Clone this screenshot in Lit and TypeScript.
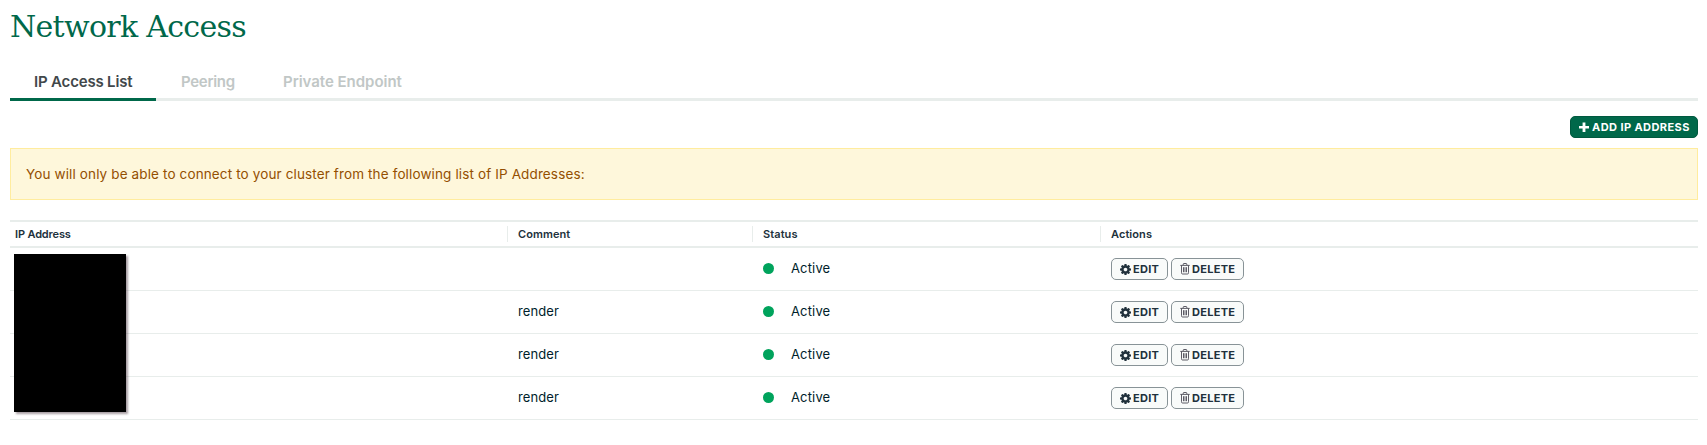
import { LitElement, html, css, svg } from "lit";
import { customElement } from "lit/decorators.js";

const plus = svg`<svg class="plus" width="10" height="11" viewBox="0 0 10 11"><path d="M3.600.5h2.800v3.400H10v2.700H6.400V10H3.600V6.600H0V3.900h3.600z" fill="#fff"/></svg>`;

const gear = svg`<svg width="11" height="11" viewBox="0 0 1536 1536"><path fill="#21313c" d="M1024 768q0-106-75-181t-181-75-181 75-75 181 75 181 181 75 181-75 75-181zm512-109v222q0 12-8 23t-20 13l-185 28q-19 54-39 91 35 50 107 138 10 12 10 25t-9 23q-27 37-99 108t-94 71q-12 0-26-9l-138-108q-44 23-91 38-16 136-29 186-7 28-36 28H657q-14 0-24.500-8.500T621 1506l-28-184q-49-16-90-37l-141 107q-10 9-25 9-14 0-25-11-126-114-165-168-7-10-7-23 0-12 8-23 15-21 51-66.500t54-70.500q-27-50-41-99L29 913q-13-2-21-12.500T0 877V655q0-12 8-23t19-13l186-28q14-46 39-92-40-57-107-138-10-12-10-24 0-10 9-23 26-36 98.500-107.500T337 135q13 0 26 10l138 107q44-23 91-38 16-136 29-186 7-28 36-28h222q14 0 24.500 8.500T915 30l28 184q49 16 90 37l142-107q9-9 24-9 13 0 25 10 129 119 165 170 7 8 7 22 0 12-8 23-15 21-51 66.500t-54 70.500q26 50 41 98l183 28q13 2 21 12.500t8 23.500z"/></svg>`;

const trash = svg`<svg width="10" height="12" viewBox="0 0 10 12" fill="none" stroke="#4b4a55"><path d="M3.200 2V1.200Q3.200.5 3.900.5h2.200q.7 0 .7.700V2M.3 2.400h9.400M1.500 2.500v7.200q0 1.300 1 1.300h5q1 0 1-1.300V2.500M3.500 4.200v5M5 4.200v5M6.500 4.200v5" stroke-width=".9"/></svg>`;

@customElement("app-root")
export class AppRoot extends LitElement {
  static styles = css`
    :host { display: block; box-sizing: border-box; height: 445px; padding: 0 9px 0 10px; background: #fff; color: #21313c; font-family: Inter, "Open Sans", sans-serif; overflow: hidden; }
    * { box-sizing: border-box; }
    h1 { margin: 0; height: 66px; padding-top: 9px; font: 400 30px/36px "DejaVu Serif", serif; letter-spacing: -0.7px; color: #00684a; white-space: nowrap; }
    .tabs { display: flex; height: 35px; border-bottom: 3px solid #e8edeb; font-size: 15px; font-weight: 600; line-height: 31px; color: #c1c7c6; white-space: nowrap; }
    .tab { height: 35px; padding-left: 24px; }
    .t0 { width: 146px; color: #41474a; border-bottom: 3px solid #00684a; letter-spacing: -0.18px; }
    .t1 { width: 103px; padding-left: 25px; letter-spacing: -0.3px; }
    .t2 { letter-spacing: -0.03px; }
    .bar { display: flex; justify-content: flex-end; padding: 15px 0 10px; height: 47px; }
    button { display: flex; align-items: center; height: 22px; margin: 0; font: 700 11px/20px Inter, sans-serif; letter-spacing: 0.3px; border-radius: 5px; white-space: nowrap; }
    .add { width: 128px; padding: 0 0 0 8px; gap: 3px; border: 1px solid #00593f; background: #00684a; color: #fff; letter-spacing: 0.42px; }
    .notice { height: 52px; padding-left: 15px; border: 1px solid #ffec9e; background: #fef7db; color: #944f01; font-size: 13.500px; letter-spacing: 0.13px; line-height: 51px; white-space: nowrap; }
    .table { margin-top: 20px; }
    .row { display: grid; grid-template-columns: 497px 245px 348px 1fr; height: 43px; align-items: center; border-bottom: 1px solid #e8edeb; font-size: 13px; color: #001e2b; }
    .head { height: 28px; border-top: 2px solid #e8edeb; border-bottom: 2px solid #e8edeb; font-size: 11px; font-weight: 600; color: #21313c; }
    .head .cell { height: 16px; line-height: 16px; border-left: 1px solid #e8edeb; padding-left: 10px; letter-spacing: 0.08px; }
    .head .cell:first-child { border-left: 0; padding-left: 5px; letter-spacing: -0.15px; }
    .cell { padding-left: 11px; }
    .comment { padding-bottom: 2px; letter-spacing: 0.08px; }
    .status { display: flex; align-items: center; gap: 17px; padding-bottom: 1px; }
    .active { padding-bottom: 1px; letter-spacing: 0.15px; }
    .dot { width: 11px; height: 11px; border-radius: 50%; background: #00a35c; }
    .actions { display: flex; gap: 3px; }
    .actions button { border: 1px solid #889397; background: #f9fbfa; color: #21313c; padding: 0 0 0 8px; gap: 2px; }
    .edit { width: 57px; }
    .delete { width: 73px; }
    .ip { position: relative; align-self: start; }
    .mask { position: absolute; left: 4px; top: 6px; width: 112px; height: 158px; z-index: 1; background: #000; box-shadow: 2px 2px 2px rgba(60, 40, 50, 0.45); }
  `;

  private comments = ["", "render", "render", "render"];

  render() {
    return html`
      <h1><span>Network Access</span></h1>
      <nav class="tabs">
        <div class="tab t0">IP Access List</div>
        <div class="tab t1">Peering</div>
        <div class="tab t2">Private Endpoint</div>
      </nav>
      <div class="bar"><button class="add">${plus}<span>ADD IP ADDRESS</span></button></div>
      <div class="notice">You will only be able to connect to your cluster from the following list of IP Addresses:</div>
      <div class="table">
        <div class="row head">
          <div class="cell">IP Address</div><div class="cell">Comment</div><div class="cell">Status</div><div class="cell">Actions</div>
        </div>
        ${this.comments.map((c, i) => html`
          <div class="row">
            <div class="ip">${i === 0 ? html`<div class="mask"></div>` : ""}</div>
            <div class="cell comment">${c}</div>
            <div class="cell status"><i class="dot"></i><span class="active">Active</span></div>
            <div class="cell actions">
              <button class="edit">${gear}<span>EDIT</span></button>
              <button class="delete">${trash}<span>DELETE</span></button>
            </div>
          </div>`)}
      </div>
    `;
  }
}
